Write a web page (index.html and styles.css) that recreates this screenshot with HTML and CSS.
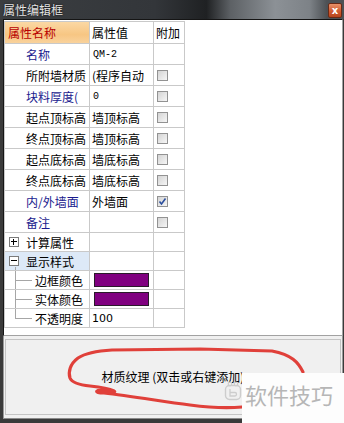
FILE: index.html
```html
<!DOCTYPE html>
<html lang="zh-CN">
<head>
    <meta charset="UTF-8">
    <meta name="viewport" content="width=device-width, initial-scale=1.0">
    <title>属性编辑框</title>
    <link rel="stylesheet" href="styles.css">
</head>
<body>

    <div class="titlebar">
        <span class="title">属性编辑框</span>
        <span class="close">x</span>
    </div>

    <div class="panel">
        <div class="props">
            <div class="cell head head-name">属性名称</div>
            <div class="cell head">属性值</div>
            <div class="cell head">附加</div>

            <div class="cell label blue">名称</div>
            <div class="cell value mono">QM-2</div>
            <div class="cell"></div>

            <div class="cell label">所附墙材质</div>
            <div class="cell value">(程序自动</div>
            <div class="cell"><span class="check"></span></div>

            <div class="cell label blue">块料厚度(</div>
            <div class="cell value mono">0</div>
            <div class="cell"><span class="check"></span></div>

            <div class="cell label">起点顶标高</div>
            <div class="cell value">墙顶标高</div>
            <div class="cell"><span class="check"></span></div>

            <div class="cell label">终点顶标高</div>
            <div class="cell value">墙顶标高</div>
            <div class="cell"><span class="check"></span></div>

            <div class="cell label">起点底标高</div>
            <div class="cell value">墙底标高</div>
            <div class="cell"><span class="check"></span></div>

            <div class="cell label">终点底标高</div>
            <div class="cell value">墙底标高</div>
            <div class="cell"><span class="check"></span></div>

            <div class="cell label blue">内/外墙面</div>
            <div class="cell value">外墙面</div>
            <div class="cell">
                <span class="check">
                    <svg width="9" height="9" viewBox="0 0 9 9"><path d="M1.5 4.5 L3.5 7 L7.5 1.5" fill="none" stroke="#2b4f9e" stroke-width="1.6"/></svg>
                </span>
            </div>

            <div class="cell label blue">备注</div>
            <div class="cell value"></div>
            <div class="cell"><span class="check"></span></div>

            <div class="cell group"><span class="toggle plus"></span>计算属性</div>
            <div class="cell"></div>
            <div class="cell"></div>

            <div class="cell group selected"><span class="toggle"></span>显示样式</div>
            <div class="cell"></div>
            <div class="cell"></div>

            <div class="cell child">边框颜色</div>
            <div class="cell value"><span class="swatch"></span></div>
            <div class="cell"></div>

            <div class="cell child">实体颜色</div>
            <div class="cell value"><span class="swatch"></span></div>
            <div class="cell"></div>

            <div class="cell child last">不透明度</div>
            <div class="cell value num">100</div>
            <div class="cell"></div>
        </div>
    </div>

    <div class="texture">
        <div class="texture-box">材质纹理 (双击或右键添加)</div>
    </div>

    <svg class="scribble" width="344" height="423" viewBox="0 0 344 423">
        <path d="M303 372 C298 362 292 355 272 351 L200 349 L112 350 C95 351 84 354 78 358 C70 364 68 372 70 378 C72 383 80 385 90 386 C100 387 110 389 114 391 C117 393 110 390 102 390 C95 390 94 393 104 393 C130 396 160 401 190 405 C205 407 222 409 242 407"
              fill="none" stroke="#e0403a" stroke-width="3.2" stroke-linecap="round" stroke-linejoin="round"/>
    </svg>

    <svg class="wm-logo" width="18" height="20" viewBox="0 0 18 20">
        <rect x="1.5" y="4.5" width="15" height="14" rx="4" fill="none" stroke="#cdcdcd" stroke-width="1.4"/>
        <circle cx="6" cy="3" r="1.8" fill="none" stroke="#cdcdcd" stroke-width="1.2"/>
        <circle cx="12" cy="3" r="1.8" fill="none" stroke="#cdcdcd" stroke-width="1.2"/>
        <path d="M6 8 V15 H11 C13 15 13 11.5 11 11.5 H6" fill="none" stroke="#cdcdcd" stroke-width="1.3"/>
    </svg>

    <div class="watermark">软件技巧</div>

</body>
</html>
```

FILE: styles.css
```css
body {
    margin: 0;
    width: 344px;
    height: 423px;
    overflow: hidden;
    position: relative;
    background: #3a3a3a;
    font-family: "Noto Sans CJK SC", sans-serif;
    font-size: 12px;
}

/* window title */
.titlebar {
    height: 19px;
    display: flex;
    align-items: center;
    justify-content: space-between;
    padding: 0 2px 0 3px;
    background: linear-gradient(90deg, #3b3e41 0%, #33363a 45%, #1f2123 60%, #5d6165 67%, #8c9196 80%, #7d8287 90%, #4d5155 95%);
}
.title {
    color: #e4e4e4;
    line-height: 19px;
    text-shadow: 0 0 2px #000;
}
.close {
    width: 14px;
    height: 15px;
    margin-top: 1px;
    color: #fff;
    font-family: "DejaVu Sans", sans-serif;
    font-weight: bold;
    font-size: 10px;
    line-height: 13px;
    text-align: center;
    border: 1px solid #6a2a16;
    border-radius: 2px;
    box-sizing: border-box;
    background: linear-gradient(#e8926a, #d05a30 55%, #b8461e);
}

/* property grid */
.panel {
    margin-left: 3px;
    width: 340px;
    height: 317px;
    box-sizing: border-box;
    background: #fff;
    border-top: 1px solid #151515;
    border-left: 1px solid #151515;
    border-right: 1px solid #a2a2a2;
    border-bottom: 1px solid #a2a2a2;
}
.props {
    display: grid;
    grid-template-columns: 84px 63px 30px;
    grid-template-rows: 21px repeat(9, 20px) repeat(5, 18px);
    gap: 1px;
    padding: 1px;
    margin-top: 1px;
    width: max-content;
    background: #c9c9c9;
}
.cell {
    position: relative;
    display: flex;
    align-items: center;
    background: #fff;
    color: #000;
    white-space: nowrap;
    overflow: hidden;
}
.head {
    padding-left: 2px;
}
.head-name {
    padding-left: 3px;
    color: #b80000;
    background: linear-gradient(#fbd8a4, #f7c683 60%, #f9d29c);
}
.label {
    padding-left: 21px;
}
.blue {
    color: #1a1a8e;
}
.value {
    padding-left: 2px;
}
.mono {
    font-family: "Liberation Mono", monospace;
    font-size: 10px;
    padding-left: 3px;
}
.num {
    font-family: "DejaVu Sans", sans-serif;
    font-size: 11px;
}
.check {
    width: 11px;
    height: 11px;
    margin-left: 3px;
    box-sizing: border-box;
    border: 1px solid #929292;
    background: linear-gradient(135deg, #d4d4d4, #f6f6f6);
    display: flex;
    align-items: center;
    justify-content: center;
}

/* tree rows */
.group {
    padding-left: 4px;
}
.selected {
    background: #dde9f7;
}
.toggle {
    position: relative;
    width: 10px;
    height: 10px;
    margin-right: 7px;
    box-sizing: border-box;
    border: 1px solid #7b7b7b;
    background: #fff;
}
.toggle::before {
    content: "";
    position: absolute;
    left: 1px;
    top: 3px;
    width: 6px;
    height: 1px;
    background: #000;
}
.plus::after {
    content: "";
    position: absolute;
    left: 3px;
    top: 1px;
    width: 1px;
    height: 6px;
    background: #000;
}
.selected::after {
    content: "";
    position: absolute;
    left: 10px;
    top: 15px;
    height: 4px;
    border-left: 1px solid #a6a6a6;
}
.child {
    padding-left: 30px;
}
.child::before {
    content: "";
    position: absolute;
    left: 10px;
    top: 0;
    height: 100%;
    border-left: 1px solid #a6a6a6;
}
.child.last::before {
    height: 9px;
}
.child::after {
    content: "";
    position: absolute;
    left: 10px;
    top: 9px;
    width: 17px;
    border-top: 1px solid #a6a6a6;
}
.swatch {
    width: 55px;
    height: 14px;
    margin-left: 2px;
    box-sizing: border-box;
    border: 1px solid #2a1a2a;
    background: #800080;
}

/* texture area */
.texture {
    margin-left: 3px;
    width: 340px;
    height: 83px;
    box-sizing: border-box;
    padding: 3px 1px 3px 1px;
    background: #f0f0f0;
    border-left: 1px solid #9a9a9a;
    border-right: 1px solid #9a9a9a;
    border-bottom: 1px solid #8a8a8a;
}
.texture-box {
    height: 100%;
    box-sizing: border-box;
    border: 1px solid #c4c4c4;
    display: flex;
    justify-content: center;
    padding-top: 28px;
    color: #000;
}

/* overlays */
.scribble {
    position: absolute;
    left: 0;
    top: 0;
    pointer-events: none;
}
.wm-logo {
    position: absolute;
    left: 224px;
    top: 381px;
}
.watermark {
    position: absolute;
    left: 242px;
    top: 373px;
    width: 102px;
    height: 50px;
    box-sizing: border-box;
    padding: 8px 0 0 3px;
    background: #fdfdfd;
    color: #b6b6b6;
    font-size: 22px;
    line-height: 26px;
    letter-spacing: 0;
    white-space: nowrap;
}
```
